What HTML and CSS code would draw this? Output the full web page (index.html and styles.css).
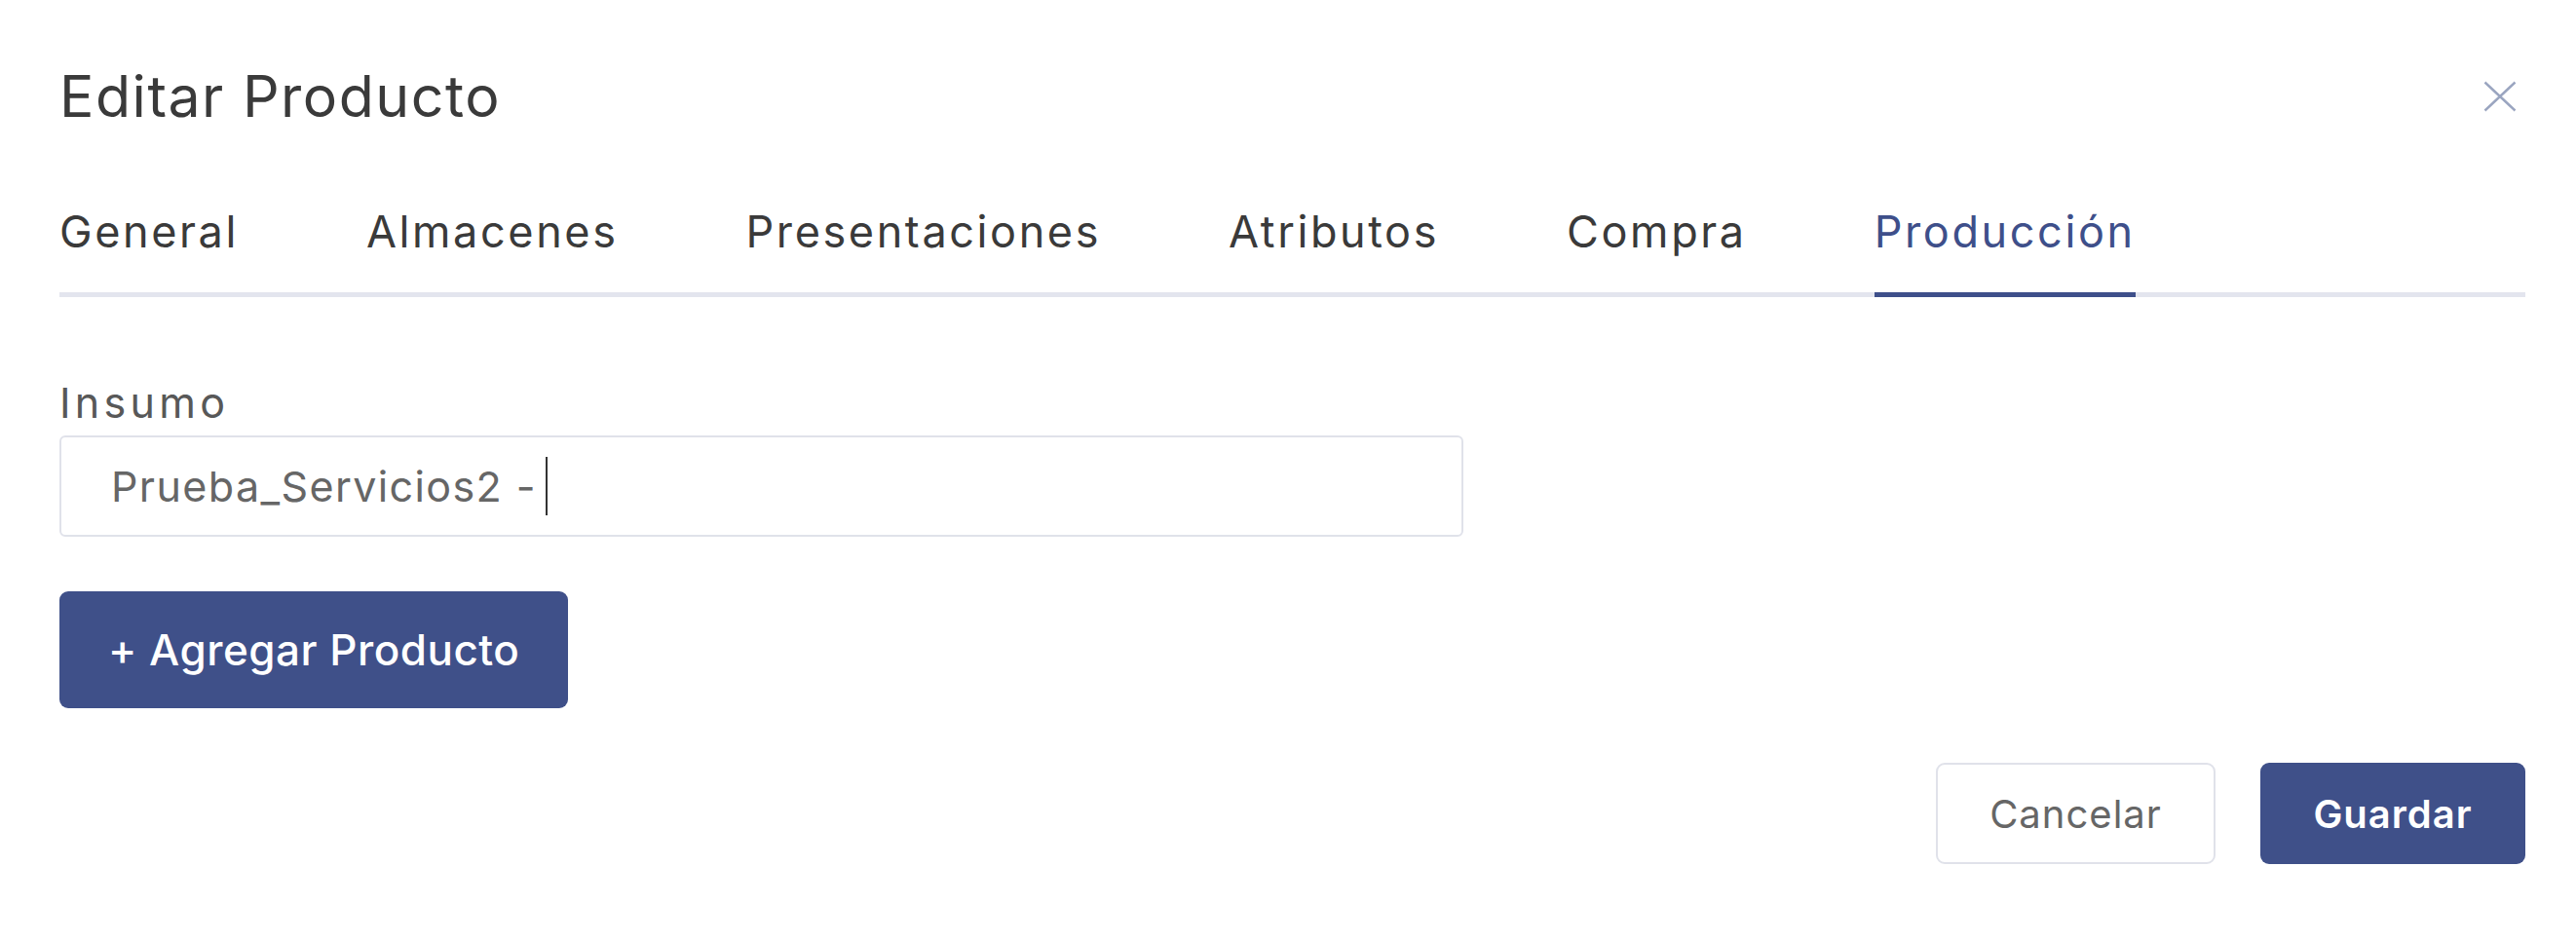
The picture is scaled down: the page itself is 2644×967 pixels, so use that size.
FILE: index.html
```html
<!DOCTYPE html>
<html lang="es">
<head>
<meta charset="UTF-8" />
<meta name="viewport" content="width=device-width, initial-scale=1" />
<title>Editar Producto</title>
<link rel="stylesheet" href="styles.css">
</head>
<body>

<div class="modal" role="dialog" aria-labelledby="modalTitle">
  <!-- cabecera -->
  <div class="modal-header">
    <h2 class="modal-title" id="modalTitle">Editar Producto</h2>
    <button class="btn-close" aria-label="Cerrar">
      <svg viewBox="0 0 34 32" width="34" height="32"><path d="M1.5 1.5 L32.5 30.5 M32.5 1.5 L1.5 30.5" stroke="#9aa5c0" stroke-width="2.4" fill="none"/></svg>
    </button>
  </div>

  <!-- pestañas -->
  <ul class="tabs">
    <li class="tab">General</li>
    <li class="tab">Almacenes</li>
    <li class="tab">Presentaciones</li>
    <li class="tab">Atributos</li>
    <li class="tab">Compra</li>
    <li class="tab active">Producción</li>
  </ul>

  <div class="tab-content">
    <label class="field-label">Insumo</label>
    <div class="field-input">
      <span class="field-value">Prueba_Servicios2 -</span><span class="caret"></span>
    </div>
    <button class="btn btn-primary btn-add">+ Agregar Producto</button>
  </div>

  <div class="modal-footer">
    <button class="btn btn-outline">Cancelar</button>
    <button class="btn btn-primary btn-save">Guardar</button>
  </div>
</div>

</body>
</html>
```

FILE: styles.css
```css
body {
  margin: 0;
  background: #fff;
  font-family: Inter, 'Noto Sans', sans-serif;
  color: #3a3a3a;
}
.modal {
  padding: 63px 52px 0 61px;
}
/* cabecera */
.modal-header {
  display: flex;
  justify-content: space-between;
  align-items: center;
  height: 71px;
}
.modal-title {
  margin: 0;
  font-size: 59px;
  font-weight: 400;
  line-height: 71px;
  letter-spacing: 1.5px;
  color: #3a3a3a;
}
.btn-close {
  background: none;
  border: none;
  padding: 0;
  margin-right: 9px;
  width: 34px;
  height: 32px;
  cursor: pointer;
}
.btn-close svg {
  display: block;
}
/* pestañas */
.tabs {
  display: flex;
  gap: 131px;
  list-style: none;
  margin: 77px 0 0;
  padding: 0;
  border-bottom: 5px solid #e3e5ee;
}
.tab {
  font-size: 45px;
  line-height: 54px;
  letter-spacing: 2.6px;
  padding-bottom: 35px;
  color: #3a3a3a;
  cursor: pointer;
}
.tab.active {
  color: #3e4f8a;
  border-bottom: 5px solid #3e4f8a;
  margin-bottom: -5px;
}
/* contenido */
.tab-content {
  display: flex;
  flex-direction: column;
  align-items: flex-start;
  padding-top: 82px;
}
.field-label {
  font-size: 43px;
  line-height: 52px;
  letter-spacing: 4.3px;
  color: #585858;
}
.field-input {
  box-sizing: border-box;
  display: flex;
  align-items: center;
  width: 1441px;
  height: 104px;
  margin-top: 8px;
  padding-left: 51px;
  border: 2px solid #e0e2ea;
  border-radius: 6px;
  font-size: 43px;
  letter-spacing: 1.4px;
  color: #666;
}
.caret {
  display: inline-block;
  width: 2px;
  height: 60px;
  margin-left: 9px;
  background: #333;
}
.btn {
  box-sizing: border-box;
  border-radius: 9px;
  font-family: Inter, 'Noto Sans', sans-serif;
  cursor: pointer;
}
.btn-primary {
  background: #3f5089;
  border: none;
  color: #fff;
}
.btn-add {
  height: 120px;
  margin-top: 56px;
  padding: 0 50px;
  font-size: 44px;
  font-weight: 500;
  letter-spacing: 0.5px;
}
/* pie */
.modal-footer {
  display: flex;
  justify-content: flex-end;
  gap: 46px;
  margin-top: 56px;
}
.modal-footer .btn {
  height: 104px;
  font-size: 40px;
  letter-spacing: 1px;
}
.btn-outline {
  width: 287px;
  background: #fff;
  border: 2px solid #e0e2ea;
  color: #666;
}
.btn-save {
  width: 272px;
  font-weight: 600;
}
```
